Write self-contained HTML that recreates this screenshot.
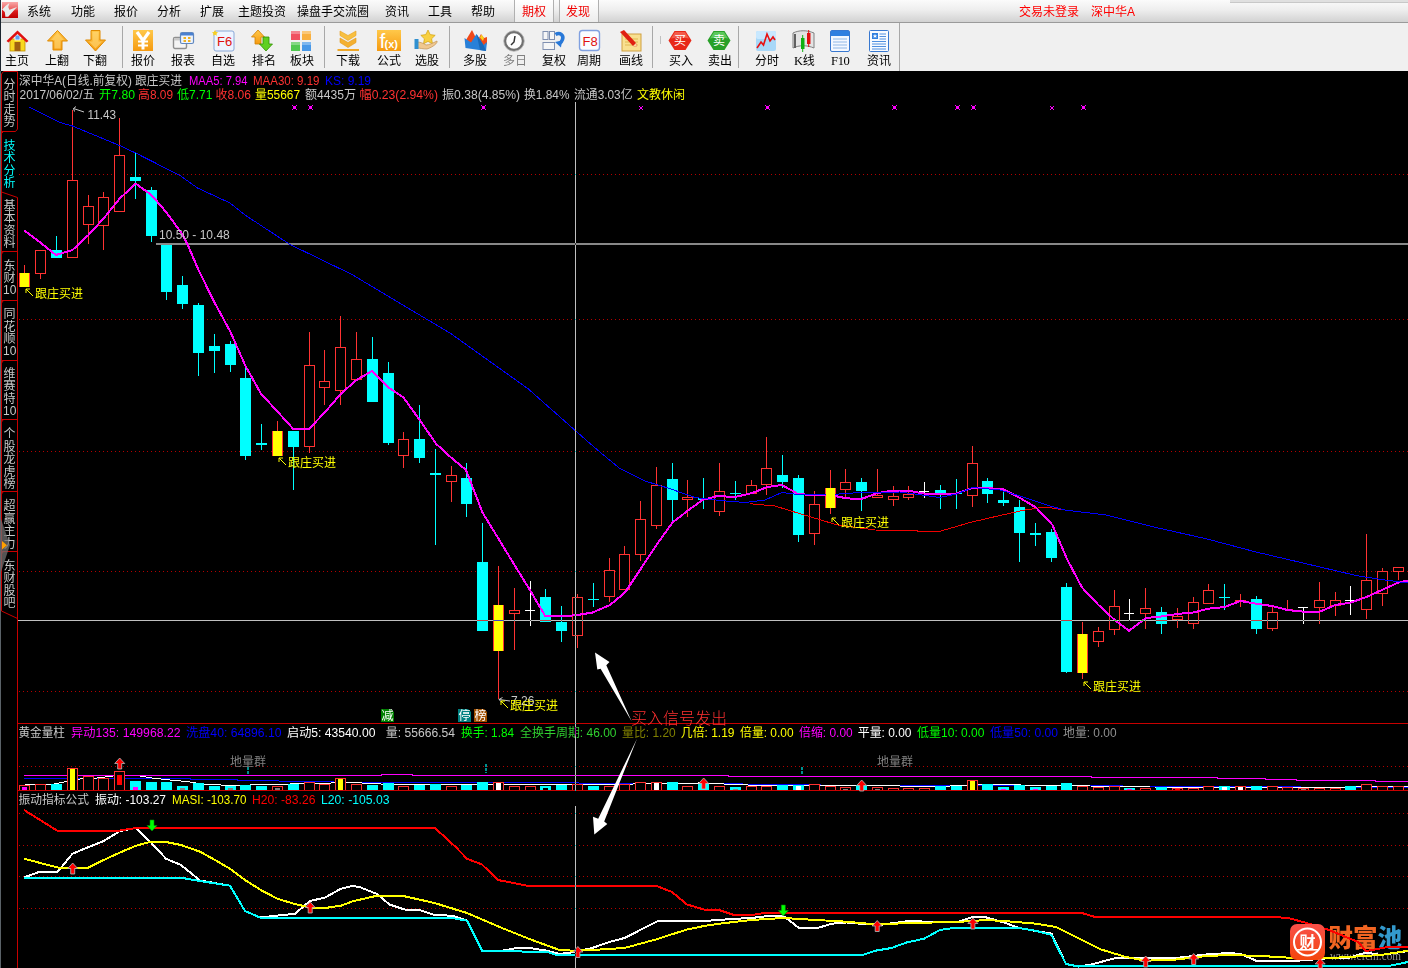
<!DOCTYPE html><html><head><meta charset="utf-8"><title>深中华A</title><style>
html,body{margin:0;padding:0;background:#000;}
#menubar span,#toolbar .lb{will-change:transform;}
body{width:1408px;height:968px;overflow:hidden;position:relative;font-family:"Liberation Sans","Noto Sans CJK SC",sans-serif;font-size:12px;}
#menubar{position:absolute;left:0;top:0;width:1408px;height:22px;background:linear-gradient(#fbfbfb 0%,#eeeeee 45%,#d2d2d2 100%);border-bottom:1px solid #9a9a9a;}
#menubar span{position:absolute;top:4px;line-height:16px;color:#000;white-space:nowrap;}
#menubar .tab{position:absolute;top:0;height:22px;border-left:1px solid #b0b0b0;border-right:1px solid #b0b0b0;background:linear-gradient(#ffffff,#ececec);}
#toolbar{position:absolute;left:0;top:23px;width:1408px;height:48px;background:#f0f0f0;}
#toolbar .lb{position:absolute;top:31px;line-height:14px;color:#000;white-space:nowrap;}
#toolbar .lb b{font-family:'Liberation Serif',serif;font-weight:400;font-size:12.5px;letter-spacing:-0.3px}
#toolbar .sp{position:absolute;top:3px;width:1px;height:42px;background:#a8a8a8;}
#toolbar svg{position:absolute;}
.edge{position:absolute;left:0;top:0;width:1px;height:71px;background:#1c2630;}

</style></head><body>
<div id="menubar">
<svg width="16" height="16" viewBox="0 0 16 16" style="position:absolute;left:2px;top:2px"><defs><linearGradient id="lgo" x1="0" y1="0" x2="0" y2="1"><stop offset="0" stop-color="#f8a8a8"/><stop offset="0.45" stop-color="#ec6060"/><stop offset="0.55" stop-color="#dc2020"/><stop offset="1" stop-color="#c00000"/></linearGradient></defs><rect width="16" height="16" fill="url(#lgo)"/><path d="M7.4 1L6.2 5.1L7.4 7.7L15 5.1L6.2 14.8H3.4L2.8 10L0.1 7.4L3.7 3.7Z" fill="#e8ecec"/></svg>
<span style="left:27px">系统</span>
<span style="left:70.5px">功能</span>
<span style="left:114px">报价</span>
<span style="left:157px">分析</span>
<span style="left:200px">扩展</span>
<span style="left:237.5px">主题投资</span>
<span style="left:297px">操盘手交流圈</span>
<span style="left:385px">资讯</span>
<span style="left:428px">工具</span>
<span style="left:471px">帮助</span>
<div class="tab" style="left:514px;width:38px"></div><div class="tab" style="left:559px;width:38px"></div>
<span style="left:522px;color:#f00000">期权</span><span style="left:566px;color:#f00000">发现</span>
<span style="left:1019px;color:#ff0000">交易未登录</span><span style="left:1091px;color:#ff0000">深中华A</span>
<div style="position:absolute;left:1230px;top:0;width:178px;height:2px;background:#e0e0e0;border-bottom:1px solid #c8c8c8"></div>
</div>
<div id="toolbar">
<svg width="24" height="24" viewBox="0 0 24 24" style="left:6px;top:6px"><rect x="4" y="10" width="15" height="12" fill="#f8d820" stroke="#c09000" stroke-width="0.8"/><rect x="8.5" y="13" width="6" height="9" fill="#a06010"/><rect x="9" y="6" width="5" height="5" fill="#60a0f0" stroke="#fff" stroke-width="0.8"/><path d="M0.5 12L11.5 1.5L22.5 12L20.5 13.5L11.5 5L2.5 13.5Z" fill="#e01010"/></svg>
<span class="lb" style="left:5px;color:#000">主页</span>
<svg width="24" height="24" viewBox="0 0 24 24" style="left:46px;top:6px"><defs><linearGradient id="og" x1="0" y1="0" x2="0" y2="1"><stop offset="0" stop-color="#ffc84a"/><stop offset="1" stop-color="#f59a10"/></linearGradient></defs><path d="M11.5 1.5L21.5 12H16V21H7V12H1.5Z" fill="url(#og)" stroke="#e08a00" stroke-width="1"/><path d="M11.5 4L18 11H14.5V19.5H8.5V11H5Z" fill="#ffd878" opacity="0.6"/></svg>
<span class="lb" style="left:44.5px;color:#000">上翻</span>
<svg width="24" height="24" viewBox="0 0 24 24" style="left:84px;top:6px"><path d="M11.5 22L21.5 11H16V1.5H7V11H1.5Z" fill="url(#og)" stroke="#e08a00" stroke-width="1"/><path d="M11.5 19.5L18 12.5H14.5V3H8.5V12.5H5Z" fill="#ffd878" opacity="0.6"/></svg>
<span class="lb" style="left:83px;color:#000">下翻</span>
<svg width="24" height="24" viewBox="0 0 24 24" style="left:131px;top:6px"><rect x="2" y="1" width="20" height="21" fill="url(#og)"/><path d="M6 3L12 11.500L18 3" stroke="#fff" stroke-width="3.2" fill="none"/><path d="M12 11V20.500" stroke="#fff" stroke-width="3" fill="none"/><path d="M7 12.500H17M7 16.500H17" stroke="#fff" stroke-width="2" fill="none"/></svg>
<span class="lb" style="left:131px;color:#000">报价</span>
<svg width="24" height="24" viewBox="0 0 24 24" style="left:172px;top:6px"><rect x="1.5" y="8.5" width="13" height="11" rx="1.5" fill="#f4f4f4" stroke="#909090" stroke-width="1.4"/><rect x="2" y="9" width="12" height="2.5" fill="#c8c8c8"/><rect x="8.5" y="3.5" width="13" height="11" rx="1.5" fill="#eef4fc" stroke="#6088c0" stroke-width="1.2"/><rect x="9" y="4" width="12" height="2.5" fill="#4a80d0"/><rect x="11.5" y="8" width="2.5" height="2" fill="#f0b020"/><rect x="16" y="8" width="2.5" height="2" fill="#f0b020"/><rect x="11.5" y="11" width="2.5" height="2" fill="#f0b020"/><rect x="16" y="11" width="2.5" height="2" fill="#f0b020"/></svg>
<span class="lb" style="left:171px;color:#000">报表</span>
<svg width="24" height="24" viewBox="0 0 24 24" style="left:212px;top:6px"><rect x="2" y="2" width="20" height="20" rx="2" fill="#eef4ff" stroke="#88a8d8"/><text x="5" y="17" font-size="13" fill="#e01010" font-family="Liberation Sans, sans-serif">F6</text><path d="M1 0l1 2l2 0.3l-1.5 1.4l0.4 2l-1.9-1l-1.9 1l0.4-2l-1.5-1.4l2-0.3z" transform="translate(2,1)" fill="#f8d020"/></svg>
<span class="lb" style="left:211px;color:#000">自选</span>
<svg width="24" height="24" viewBox="0 0 24 24" style="left:250px;top:6px"><path d="M8 1L14.5 8H11V15H5V8H1.5Z" fill="url(#og)" stroke="#d08000" stroke-width="0.8"/><path d="M16 22L22.5 15H19V8H13V15H9.5Z" fill="#60d020" stroke="#309000" stroke-width="0.8"/></svg>
<span class="lb" style="left:252px;color:#000">排名</span>
<svg width="24" height="24" viewBox="0 0 24 24" style="left:289px;top:6px"><rect x="2" y="2" width="9" height="9" fill="#f05060"/><rect x="13" y="2" width="9" height="9" fill="#f8b040"/><rect x="2" y="13" width="9" height="9" fill="#50c850"/><rect x="13" y="13" width="9" height="9" fill="#4898e8"/><rect x="2" y="2" width="9" height="3" fill="#fff" opacity="0.3"/><rect x="13" y="2" width="9" height="3" fill="#fff" opacity="0.3"/><rect x="2" y="13" width="9" height="3" fill="#fff" opacity="0.3"/><rect x="13" y="13" width="9" height="3" fill="#fff" opacity="0.3"/></svg>
<span class="lb" style="left:290px;color:#000">板块</span>
<svg width="24" height="24" viewBox="0 0 24 24" style="left:337px;top:6px"><path d="M3 2L11 6.500L19 2V6.500L11 11.500L3 6.500Z" fill="#f8c040" stroke="#e8a020" stroke-width="0.6"/><path d="M3 9L11 13.500L19 9V13.500L11 18.500L3 13.500Z" fill="#f4b030" stroke="#e09818" stroke-width="0.6"/><rect x="0.5" y="20" width="21.5" height="2" fill="#f0a828"/></svg>
<span class="lb" style="left:336px;color:#000">下载</span>
<svg width="24" height="24" viewBox="0 0 24 24" style="left:377px;top:6px"><rect x="0" y="1" width="24" height="21" fill="url(#og)"/><text x="2.5" y="19" font-size="21" fill="#fff" font-family="Liberation Sans, sans-serif">f</text><text x="7.5" y="19" font-size="11" font-weight="700" fill="#fff" font-family="Liberation Sans, sans-serif">(x)</text></svg>
<span class="lb" style="left:377px;color:#000">公式</span>
<svg width="26" height="24" viewBox="0 0 26 24" style="left:414px;top:6px"><path d="M14 1l2.2 4.6l5 0.7l-3.6 3.5l0.9 5l-4.5-2.4l-4.5 2.4l0.9-5l-3.6-3.5l5-0.7z" fill="#f8d040" stroke="#d0a010" stroke-width="0.7"/><path d="M3 13c3 0 6 1 9 3c3 0 7-2 11-4c1 2-4 6-10 8c-4 0-7-1-10-1z" fill="#f0c890" stroke="#c09050" stroke-width="0.7"/><rect x="0.5" y="10" width="4" height="10" fill="#3090d0"/></svg>
<span class="lb" style="left:414.5px;color:#000">选股</span>
<svg width="24" height="24" viewBox="0 0 24 24" style="left:464px;top:6px"><path d="M8 1L2 11L7.5 14.5L12 9Z" fill="#f04818"/><path d="M17 5L20 9L23 8V15L19 17L15 9Z" fill="#f04818"/><path d="M17.5 5.5L20 9L19 12L16 8.5Z" fill="#f8d020"/><path d="M0.5 9L1.500 19L22 22L23 13L19.500 16L12.500 5L7 13.500Z" fill="#2880d8"/><path d="M12.500 5L19.500 16L22 22L16 21Z" fill="#1868b8"/></svg>
<span class="lb" style="left:463px;color:#000">多股</span>
<svg width="24" height="24" viewBox="0 0 24 24" style="left:503px;top:6px"><circle cx="11" cy="12" r="9" fill="#fdfdfd" stroke="#707070" stroke-width="2.4"/><circle cx="11" cy="12" r="10.3" fill="none" stroke="#b0b0b0" stroke-width="0.8"/><path d="M12 7L11 13L8 16" stroke="#303030" stroke-width="1.5" fill="none"/></svg>
<span class="lb" style="left:503px;color:#808080">多日</span>
<svg width="24" height="24" viewBox="0 0 24 24" style="left:542px;top:6px"><rect x="1" y="2.5" width="5" height="8" fill="#f6f6f6" stroke="#8090b0"/><rect x="7.5" y="2.5" width="5" height="8" fill="#f6f6f6" stroke="#8090b0"/><rect x="1" y="13.5" width="11.5" height="7" fill="#f6f6f6" stroke="#8090b0"/><path d="M13.500 5.500C18 3 22 6 20.500 10.500C20 12 19 13.500 17.500 14.500" fill="none" stroke="#2878d8" stroke-width="3.600"/><path d="M13 13L20 11.500L19 18.500Z" fill="#2878d8"/></svg>
<span class="lb" style="left:542px;color:#000">复权</span>
<svg width="24" height="24" viewBox="0 0 24 24" style="left:578px;top:6px"><rect x="1.500" y="1.500" width="20" height="20" rx="3" fill="#fafcff" stroke="#80a0e0" stroke-width="1.4"/><text x="4.5" y="17" font-size="13" fill="#e01010" font-family="Liberation Sans, sans-serif">F8</text></svg>
<span class="lb" style="left:577px;color:#000">周期</span>
<svg width="24" height="24" viewBox="0 0 24 24" style="left:619px;top:6px"><rect x="3" y="5" width="19" height="17" fill="#f8e090" stroke="#d0a040"/><path d="M6 10H19M6 13H19M6 16H19" stroke="#e0b850" stroke-width="1"/><path d="M1 3L5 1L17 14L18 18L14 17Z" fill="#e02010"/><path d="M14 17l4 1l-1-4z" fill="#f8d8a0"/></svg>
<span class="lb" style="left:619px;color:#000">画线</span>
<svg width="24" height="24" viewBox="0 0 24 24" style="left:668px;top:6px"><path d="M6.500 2H17.500L23.500 11.500L17.500 21H6.500L0.500 11.500Z" fill="#e82818"/><path d="M7 3H17L21 9.500C15 8 9 8 3 9.500Z" fill="#f87060" opacity="0.7"/><text x="6" y="16" font-size="12" fill="#fff" font-family="Liberation Sans, Noto Sans CJK SC, sans-serif">买</text></svg>
<span class="lb" style="left:669px;color:#000">买入</span>
<svg width="24" height="24" viewBox="0 0 24 24" style="left:707px;top:6px"><path d="M6.500 2H17.500L23.500 11.500L17.500 21H6.500L0.500 11.500Z" fill="#28a028"/><path d="M7 3H17L21 9.500C15 8 9 8 3 9.500Z" fill="#70d870" opacity="0.7"/><text x="6" y="16" font-size="12" fill="#fff" font-family="Liberation Sans, Noto Sans CJK SC, sans-serif">卖</text></svg>
<span class="lb" style="left:707.5px;color:#000">卖出</span>
<svg width="24" height="24" viewBox="0 0 24 24" style="left:754px;top:6px"><rect x="2" y="2" width="20" height="20" rx="2" fill="#a8d8f8"/><rect x="2" y="2" width="20" height="8" rx="2" fill="#c8e8ff"/><path d="M3 19L7 13L9.500 16L13 5L16 12L19 8L21 11" stroke="#e81010" stroke-width="1.6" fill="none"/></svg>
<span class="lb" style="left:755px;color:#000">分时</span>
<svg width="24" height="24" viewBox="0 0 24 24" style="left:791px;top:6px"><path d="M2 4c6-3 14-3 21 0v15c-7-3-15-3-21 0z" fill="#e4e4e4" stroke="#808080"/><path d="M4 5v14" stroke="#606060" stroke-width="2"/><rect x="10" y="9" width="3.500" height="11" fill="#10b010"/><path d="M11.700 6v17" stroke="#10b010" stroke-width="1"/><rect x="16" y="4" width="3.500" height="11" fill="#e01010"/><path d="M17.700 1v17" stroke="#e01010" stroke-width="1"/></svg>
<span class="lb" style="left:794px;color:#000"><b>K</b>线</span>
<svg width="24" height="24" viewBox="0 0 24 24" style="left:828px;top:6px"><rect x="2.500" y="1.500" width="19" height="21" rx="1.500" fill="#f4f8ff" stroke="#3878d0"/><rect x="3" y="2" width="18" height="5" fill="#3080e0"/><path d="M5 10H19M5 13H19M5 16H19M5 19H19" stroke="#90b8e8" stroke-width="1.2"/></svg>
<span class="lb" style="left:831px;color:#000"><b>F10</b></span>
<svg width="24" height="24" viewBox="0 0 24 24" style="left:867px;top:6px"><rect x="2.500" y="1.500" width="19" height="21" rx="1" fill="#f8fbff" stroke="#3878d0"/><rect x="5" y="4" width="6" height="6" fill="#3080e0"/><path d="M8 5l0.700 1.500h1.500l-1.200 1l0.500 1.500l-1.500-1l-1.500 1l0.500-1.500l-1.200-1h1.500z" fill="#fff"/><path d="M12.500 5H19M12.500 7.500H19M12.500 10H19M5 12.500H19M5 15H19M5 17.500H19M5 20H19" stroke="#5090e0" stroke-width="1"/></svg>
<span class="lb" style="left:867px;color:#000">资讯</span>
<div class="sp" style="left:122px"></div>
<div class="sp" style="left:324px"></div>
<div class="sp" style="left:449px"></div>
<div class="sp" style="left:652px"></div>
<div class="sp" style="left:738px"></div>
<div class="sp" style="left:899px;top:0;height:48px"></div>
<div class="sp" style="left:660px;top:13px;height:8px;background:#c0c0c0"></div>
</div>
<div class="edge"></div>
<svg id="chart" width="1408" height="897" viewBox="0 71 1408 897" style="position:absolute;left:0;top:71px;will-change:transform;">
<rect x="0" y="70" width="1408" height="898" fill="#000"/>
<g stroke="#b40000" stroke-width="1" stroke-dasharray="1 3" shape-rendering="crispEdges">
<line x1="19" x2="1408" y1="174.5" y2="174.5"/>
<line x1="19" x2="1408" y1="319.5" y2="319.5"/>
<line x1="19" x2="1408" y1="451.5" y2="451.5"/>
<line x1="19" x2="1408" y1="571.5" y2="571.5"/>
<line x1="19" x2="1408" y1="691.5" y2="691.5"/>
<line x1="19" x2="1408" y1="766.5" y2="766.5"/>
<line x1="19" x2="1408" y1="813.5" y2="813.5"/>
<line x1="19" x2="1408" y1="845.5" y2="845.5"/>
<line x1="19" x2="1408" y1="876.5" y2="876.5"/>
<line x1="19" x2="1408" y1="908.5" y2="908.5"/>
</g>
<g shape-rendering="crispEdges" stroke-width="1">
<rect x="24" y="265" width="1" height="22" fill="#ff3232"/>
<rect x="19.5" y="273.5" width="10" height="13" fill="#000" stroke="#ff3232"/>
<rect x="40" y="274" width="1" height="5" fill="#ff3232"/>
<rect x="35.5" y="250.5" width="10" height="23" fill="#000" stroke="#ff3232"/>
<rect x="56" y="236" width="1" height="22" fill="#00ffff"/>
<rect x="51" y="250" width="11" height="8" fill="#00ffff"/>
<rect x="72" y="110" width="1" height="70" fill="#ff3232"/>
<rect x="67.5" y="180.5" width="10" height="77" fill="#000" stroke="#ff3232"/>
<rect x="88" y="195" width="1" height="11" fill="#ff3232"/>
<rect x="88" y="225" width="1" height="19" fill="#ff3232"/>
<rect x="83.5" y="206.5" width="10" height="18" fill="#000" stroke="#ff3232"/>
<rect x="103" y="192" width="1" height="5" fill="#ff3232"/>
<rect x="103" y="226" width="1" height="24" fill="#ff3232"/>
<rect x="98.5" y="197.5" width="10" height="28" fill="#000" stroke="#ff3232"/>
<rect x="119" y="118" width="1" height="37" fill="#ff3232"/>
<rect x="114.5" y="155.5" width="10" height="56" fill="#000" stroke="#ff3232"/>
<rect x="135" y="153" width="1" height="46" fill="#00ffff"/>
<rect x="130" y="177" width="11" height="4" fill="#00ffff"/>
<rect x="151" y="187" width="1" height="55" fill="#00ffff"/>
<rect x="146" y="190" width="11" height="46" fill="#00ffff"/>
<rect x="166" y="244" width="1" height="56" fill="#00ffff"/>
<rect x="161" y="244" width="11" height="48" fill="#00ffff"/>
<rect x="182" y="276" width="1" height="33" fill="#00ffff"/>
<rect x="177" y="285" width="11" height="19" fill="#00ffff"/>
<rect x="198" y="303" width="1" height="73" fill="#00ffff"/>
<rect x="193" y="305" width="11" height="48" fill="#00ffff"/>
<rect x="214" y="334" width="1" height="39" fill="#00ffff"/>
<rect x="209" y="346" width="11" height="5" fill="#00ffff"/>
<rect x="230" y="341" width="1" height="31" fill="#00ffff"/>
<rect x="225" y="344" width="11" height="21" fill="#00ffff"/>
<rect x="245" y="368" width="1" height="92" fill="#00ffff"/>
<rect x="240" y="378" width="11" height="78" fill="#00ffff"/>
<rect x="261" y="424" width="1" height="26" fill="#00ffff"/>
<rect x="256" y="443" width="11" height="2" fill="#00ffff"/>
<rect x="277" y="421" width="1" height="35" fill="#ff3232"/>
<rect x="272.5" y="431.5" width="10" height="24" fill="#000" stroke="#ff3232"/>
<rect x="293" y="431" width="1" height="59" fill="#00ffff"/>
<rect x="288" y="431" width="11" height="16" fill="#00ffff"/>
<rect x="309" y="332" width="1" height="33" fill="#ff3232"/>
<rect x="309" y="447" width="1" height="6" fill="#ff3232"/>
<rect x="304.5" y="365.5" width="10" height="81" fill="#000" stroke="#ff3232"/>
<rect x="324" y="350" width="1" height="31" fill="#ff3232"/>
<rect x="324" y="388" width="1" height="17" fill="#ff3232"/>
<rect x="319.5" y="381.5" width="10" height="6" fill="#000" stroke="#ff3232"/>
<rect x="340" y="316" width="1" height="31" fill="#ff3232"/>
<rect x="340" y="391" width="1" height="14" fill="#ff3232"/>
<rect x="335.5" y="347.5" width="10" height="43" fill="#000" stroke="#ff3232"/>
<rect x="356" y="332" width="1" height="27" fill="#ff3232"/>
<rect x="351.5" y="359.5" width="10" height="20" fill="#000" stroke="#ff3232"/>
<rect x="372" y="337" width="1" height="65" fill="#00ffff"/>
<rect x="367" y="359" width="11" height="43" fill="#00ffff"/>
<rect x="388" y="362" width="1" height="83" fill="#00ffff"/>
<rect x="383" y="373" width="11" height="70" fill="#00ffff"/>
<rect x="403" y="432" width="1" height="7" fill="#ff3232"/>
<rect x="403" y="456" width="1" height="12" fill="#ff3232"/>
<rect x="398.5" y="439.5" width="10" height="16" fill="#000" stroke="#ff3232"/>
<rect x="419" y="405" width="1" height="58" fill="#00ffff"/>
<rect x="414" y="439" width="11" height="19" fill="#00ffff"/>
<rect x="435" y="449" width="1" height="96" fill="#00ffff"/>
<rect x="430" y="473" width="11" height="2" fill="#00ffff"/>
<rect x="451" y="466" width="1" height="9" fill="#ff3232"/>
<rect x="451" y="482" width="1" height="20" fill="#ff3232"/>
<rect x="446.5" y="475.5" width="10" height="6" fill="#000" stroke="#ff3232"/>
<rect x="466" y="463" width="1" height="54" fill="#00ffff"/>
<rect x="461" y="478" width="11" height="26" fill="#00ffff"/>
<rect x="482" y="523" width="1" height="108" fill="#00ffff"/>
<rect x="477" y="562" width="11" height="69" fill="#00ffff"/>
<rect x="498" y="566" width="1" height="133" fill="#ff3232"/>
<rect x="493.5" y="605.5" width="10" height="45" fill="#000" stroke="#ff3232"/>
<rect x="514" y="588" width="1" height="22" fill="#ff3232"/>
<rect x="514" y="614" width="1" height="36" fill="#ff3232"/>
<rect x="509.5" y="610.5" width="10" height="3" fill="#000" stroke="#ff3232"/>
<rect x="530" y="581" width="1" height="45" fill="#ffffff"/>
<rect x="525" y="610" width="10" height="1" fill="#ffffff"/>
<rect x="545" y="589" width="1" height="33" fill="#00ffff"/>
<rect x="540" y="597" width="11" height="25" fill="#00ffff"/>
<rect x="561" y="606" width="1" height="36" fill="#00ffff"/>
<rect x="556" y="622" width="11" height="9" fill="#00ffff"/>
<rect x="577" y="594" width="1" height="3" fill="#ff3232"/>
<rect x="577" y="636" width="1" height="12" fill="#ff3232"/>
<rect x="572.5" y="597.5" width="10" height="38" fill="#000" stroke="#ff3232"/>
<rect x="593" y="583" width="1" height="24" fill="#00ffff"/>
<rect x="588" y="599" width="11" height="1" fill="#00ffff"/>
<rect x="609" y="558" width="1" height="12" fill="#ff3232"/>
<rect x="609" y="597" width="1" height="5" fill="#ff3232"/>
<rect x="604.5" y="570.5" width="10" height="26" fill="#000" stroke="#ff3232"/>
<rect x="624" y="546" width="1" height="8" fill="#ff3232"/>
<rect x="619.5" y="554.5" width="10" height="35" fill="#000" stroke="#ff3232"/>
<rect x="640" y="501" width="1" height="18" fill="#ff3232"/>
<rect x="640" y="555" width="1" height="6" fill="#ff3232"/>
<rect x="635.5" y="519.5" width="10" height="35" fill="#000" stroke="#ff3232"/>
<rect x="656" y="467" width="1" height="18" fill="#ff3232"/>
<rect x="656" y="526" width="1" height="3" fill="#ff3232"/>
<rect x="651.5" y="485.5" width="10" height="40" fill="#000" stroke="#ff3232"/>
<rect x="672" y="463" width="1" height="60" fill="#00ffff"/>
<rect x="667" y="479" width="11" height="21" fill="#00ffff"/>
<rect x="687" y="480" width="1" height="17" fill="#ff3232"/>
<rect x="687" y="500" width="1" height="17" fill="#ff3232"/>
<rect x="682.5" y="497.5" width="10" height="2" fill="#000" stroke="#ff3232"/>
<rect x="703" y="478" width="1" height="31" fill="#00ffff"/>
<rect x="698" y="498" width="11" height="2" fill="#00ffff"/>
<rect x="719" y="463" width="1" height="28" fill="#ff3232"/>
<rect x="719" y="512" width="1" height="4" fill="#ff3232"/>
<rect x="714.5" y="491.5" width="10" height="20" fill="#000" stroke="#ff3232"/>
<rect x="735" y="481" width="1" height="19" fill="#00ffff"/>
<rect x="730" y="493" width="11" height="1" fill="#00ffff"/>
<rect x="751" y="480" width="1" height="5" fill="#ff3232"/>
<rect x="746.5" y="485.5" width="10" height="8" fill="#000" stroke="#ff3232"/>
<rect x="766" y="437" width="1" height="31" fill="#ff3232"/>
<rect x="766" y="485" width="1" height="10" fill="#ff3232"/>
<rect x="761.5" y="468.5" width="10" height="16" fill="#000" stroke="#ff3232"/>
<rect x="782" y="455" width="1" height="33" fill="#00ffff"/>
<rect x="777" y="475" width="11" height="7" fill="#00ffff"/>
<rect x="798" y="475" width="1" height="67" fill="#00ffff"/>
<rect x="793" y="478" width="11" height="57" fill="#00ffff"/>
<rect x="814" y="491" width="1" height="13" fill="#ff3232"/>
<rect x="814" y="534" width="1" height="11" fill="#ff3232"/>
<rect x="809.5" y="504.5" width="10" height="29" fill="#000" stroke="#ff3232"/>
<rect x="830" y="470" width="1" height="44" fill="#ff3232"/>
<rect x="825.5" y="488.5" width="10" height="19" fill="#000" stroke="#ff3232"/>
<rect x="845" y="469" width="1" height="13" fill="#ff3232"/>
<rect x="845" y="490" width="1" height="8" fill="#ff3232"/>
<rect x="840.5" y="482.5" width="10" height="7" fill="#000" stroke="#ff3232"/>
<rect x="861" y="478" width="1" height="33" fill="#00ffff"/>
<rect x="856" y="482" width="11" height="9" fill="#00ffff"/>
<rect x="877" y="469" width="1" height="26" fill="#ff3232"/>
<rect x="872.5" y="495.5" width="10" height="2" fill="#000" stroke="#ff3232"/>
<rect x="893" y="486" width="1" height="10" fill="#ff3232"/>
<rect x="893" y="500" width="1" height="6" fill="#ff3232"/>
<rect x="888.5" y="496.5" width="10" height="3" fill="#000" stroke="#ff3232"/>
<rect x="908" y="486" width="1" height="8" fill="#ff3232"/>
<rect x="908" y="498" width="1" height="2" fill="#ff3232"/>
<rect x="903.5" y="494.5" width="10" height="3" fill="#000" stroke="#ff3232"/>
<rect x="924" y="482" width="1" height="16" fill="#ffffff"/>
<rect x="919" y="491" width="10" height="1" fill="#ffffff"/>
<rect x="940" y="485" width="1" height="24" fill="#00ffff"/>
<rect x="935" y="490" width="11" height="4" fill="#00ffff"/>
<rect x="956" y="479" width="1" height="30" fill="#00ffff"/>
<rect x="951" y="493" width="11" height="1" fill="#00ffff"/>
<rect x="972" y="446" width="1" height="17" fill="#ff3232"/>
<rect x="972" y="496" width="1" height="11" fill="#ff3232"/>
<rect x="967.5" y="463.5" width="10" height="32" fill="#000" stroke="#ff3232"/>
<rect x="987" y="478" width="1" height="25" fill="#00ffff"/>
<rect x="982" y="481" width="11" height="13" fill="#00ffff"/>
<rect x="1003" y="488" width="1" height="18" fill="#00ffff"/>
<rect x="998" y="500" width="11" height="3" fill="#00ffff"/>
<rect x="1019" y="500" width="1" height="62" fill="#00ffff"/>
<rect x="1014" y="507" width="11" height="26" fill="#00ffff"/>
<rect x="1035" y="523" width="1" height="23" fill="#00ffff"/>
<rect x="1030" y="533" width="11" height="2" fill="#00ffff"/>
<rect x="1051" y="529" width="1" height="33" fill="#00ffff"/>
<rect x="1046" y="532" width="11" height="26" fill="#00ffff"/>
<rect x="1066" y="583" width="1" height="90" fill="#00ffff"/>
<rect x="1061" y="587" width="11" height="85" fill="#00ffff"/>
<rect x="1082" y="622" width="1" height="57" fill="#ff3232"/>
<rect x="1077.5" y="634.5" width="10" height="38" fill="#000" stroke="#ff3232"/>
<rect x="1098" y="627" width="1" height="4" fill="#ff3232"/>
<rect x="1098" y="642" width="1" height="5" fill="#ff3232"/>
<rect x="1093.5" y="631.5" width="10" height="10" fill="#000" stroke="#ff3232"/>
<rect x="1114" y="590" width="1" height="16" fill="#ff3232"/>
<rect x="1114" y="630" width="1" height="5" fill="#ff3232"/>
<rect x="1109.5" y="606.5" width="10" height="23" fill="#000" stroke="#ff3232"/>
<rect x="1129" y="599" width="1" height="22" fill="#ffffff"/>
<rect x="1124" y="613" width="10" height="1" fill="#ffffff"/>
<rect x="1145" y="588" width="1" height="20" fill="#ff3232"/>
<rect x="1145" y="614" width="1" height="15" fill="#ff3232"/>
<rect x="1140.5" y="608.5" width="10" height="5" fill="#000" stroke="#ff3232"/>
<rect x="1161" y="607" width="1" height="27" fill="#00ffff"/>
<rect x="1156" y="612" width="11" height="12" fill="#00ffff"/>
<rect x="1177" y="608" width="1" height="8" fill="#ff3232"/>
<rect x="1177" y="620" width="1" height="8" fill="#ff3232"/>
<rect x="1172.5" y="616.5" width="10" height="3" fill="#000" stroke="#ff3232"/>
<rect x="1193" y="597" width="1" height="5" fill="#ff3232"/>
<rect x="1193" y="624" width="1" height="5" fill="#ff3232"/>
<rect x="1188.5" y="602.5" width="10" height="21" fill="#000" stroke="#ff3232"/>
<rect x="1208" y="584" width="1" height="6" fill="#ff3232"/>
<rect x="1203.5" y="590.5" width="10" height="13" fill="#000" stroke="#ff3232"/>
<rect x="1224" y="584" width="1" height="26" fill="#00ffff"/>
<rect x="1219" y="597" width="11" height="1" fill="#00ffff"/>
<rect x="1240" y="594" width="1" height="6" fill="#ff3232"/>
<rect x="1240" y="602" width="1" height="5" fill="#ff3232"/>
<rect x="1235" y="600" width="11" height="2" fill="#ff3232"/>
<rect x="1256" y="596" width="1" height="38" fill="#00ffff"/>
<rect x="1251" y="599" width="11" height="30" fill="#00ffff"/>
<rect x="1272" y="607" width="1" height="5" fill="#ff3232"/>
<rect x="1272" y="629" width="1" height="2" fill="#ff3232"/>
<rect x="1267.5" y="612.5" width="10" height="16" fill="#000" stroke="#ff3232"/>
<rect x="1287" y="600" width="1" height="10" fill="#ff3232"/>
<rect x="1282" y="609" width="11" height="1" fill="#ff3232"/>
<rect x="1303" y="607" width="1" height="17" fill="#ffffff"/>
<rect x="1298" y="607" width="10" height="1" fill="#ffffff"/>
<rect x="1319" y="582" width="1" height="18" fill="#ff3232"/>
<rect x="1319" y="608" width="1" height="16" fill="#ff3232"/>
<rect x="1314.5" y="600.5" width="10" height="7" fill="#000" stroke="#ff3232"/>
<rect x="1335" y="592" width="1" height="8" fill="#ff3232"/>
<rect x="1335" y="606" width="1" height="10" fill="#ff3232"/>
<rect x="1330.5" y="600.5" width="10" height="5" fill="#000" stroke="#ff3232"/>
<rect x="1350" y="586" width="1" height="29" fill="#ffffff"/>
<rect x="1345" y="600" width="10" height="1" fill="#ffffff"/>
<rect x="1366" y="534" width="1" height="46" fill="#ff3232"/>
<rect x="1366" y="610" width="1" height="9" fill="#ff3232"/>
<rect x="1361.5" y="580.5" width="10" height="29" fill="#000" stroke="#ff3232"/>
<rect x="1382" y="568" width="1" height="3" fill="#ff3232"/>
<rect x="1382" y="594" width="1" height="12" fill="#ff3232"/>
<rect x="1377.5" y="571.5" width="10" height="22" fill="#000" stroke="#ff3232"/>
<rect x="1398" y="572" width="1" height="8" fill="#ff3232"/>
<rect x="1393.5" y="567.5" width="10" height="4" fill="#000" stroke="#ff3232"/>
</g>
<rect x="156" y="243" width="1252" height="2" fill="#888888" shape-rendering="crispEdges"/>
<polyline points="750.0,503.7 775.0,506.0 800.0,513.7 837.5,525.0 875.0,530.0 917.5,531.0 941.0,531.0 970.0,522.5 1000.0,515.5 1025.0,510.0 1045.0,507.0 1065.0,510.0" fill="none" stroke="#f00000" stroke-width="1" shape-rendering="crispEdges"/>
<polyline points="24.5,230.5 40.5,242.7 56.0,255.0 72.5,250.0 88.5,235.0 104.0,218.0 119.5,198.7 135.7,183.7 151.5,195.0 166.5,212.5 182.5,234.5 188.0,245.5 198.5,270.0 214.5,302.5 230.0,331.0 245.5,366.0 261.0,393.7 277.0,411.0 293.0,428.7 309.0,429.0 324.7,412.5 341.0,393.7 356.5,380.0 372.0,371.0 388.5,387.5 403.5,397.5 419.7,420.0 436.0,443.7 451.0,457.5 466.0,470.0 482.5,512.5 498.5,538.7 514.5,565.0 530.5,591.0 545.0,615.7 570.0,615.7 577.5,615.0 592.5,612.5 610.0,605.0 625.0,592.5 640.0,570.0 656.5,545.0 672.5,522.5 688.7,510.0 702.5,500.0 717.5,496.0 735.0,497.0 752.5,493.0 767.0,487.0 782.0,485.0 797.5,493.7 815.0,495.5 830.0,495.0 845.0,498.0 860.0,499.5 877.5,493.0 893.7,490.5 910.0,491.0 925.0,493.7 940.0,494.0 956.0,493.7 972.5,488.0 987.5,488.0 1003.7,489.5 1020.0,498.0 1036.0,507.5 1052.5,525.0 1067.5,560.0 1082.0,587.5 1098.5,605.0 1114.7,620.0 1129.0,630.7 1146.0,618.0 1161.0,616.5 1177.0,614.0 1193.5,612.5 1208.5,608.7 1224.7,607.0 1240.5,601.0 1256.0,603.7 1272.0,606.0 1287.5,610.0 1303.5,611.7 1319.7,611.7 1335.5,605.0 1351.0,602.5 1366.5,597.0 1382.0,590.0 1398.5,582.5 1408.0,580.5" fill="none" stroke="#ff00ff" stroke-width="2" stroke-linejoin="round" shape-rendering="crispEdges"/>
<polyline points="28.7,107.0 60.0,122.5 72.5,126.0 120.0,145.7 135.7,153.0 180.0,175.5 197.5,188.0 230.0,203.0 245.0,215.0 290.0,244.5 352.0,274.5 361.0,280.0 451.0,333.7 528.0,388.7 586.0,440.0 597.5,450.0 620.0,468.7 645.0,481.0 670.0,488.7 695.0,497.5 720.0,500.5 745.0,502.5 765.0,500.0 782.0,492.5 797.5,494.5 825.0,495.0 860.0,492.5 900.0,492.0 940.0,497.5 957.5,493.7 972.5,487.5 1000.0,490.0 1020.0,496.0 1050.0,506.0 1065.0,510.0 1106.0,515.0 1156.0,527.5 1206.0,538.7 1256.0,552.0 1306.0,563.7 1356.0,575.5 1381.0,579.5 1408.0,583.0" fill="none" stroke="#0000ff" stroke-width="1" shape-rendering="crispEdges"/>
<g shape-rendering="crispEdges">
<rect x="20" y="273" width="9" height="14" fill="#ffff00"/>
<rect x="273" y="431" width="9" height="25" fill="#ffff00"/>
<rect x="494" y="605" width="9" height="46" fill="#ffff00"/>
<rect x="826" y="488" width="9" height="20" fill="#ffff00"/>
<rect x="1078" y="634" width="9" height="39" fill="#ffff00"/>
</g>
<g fill="#ff00ff" shape-rendering="crispEdges">
<rect x="293" y="106" width="3" height="3"/>
<rect x="292" y="105" width="1" height="1"/>
<rect x="296" y="105" width="1" height="1"/>
<rect x="292" y="109" width="1" height="1"/>
<rect x="296" y="109" width="1" height="1"/>
<rect x="309" y="106" width="3" height="3"/>
<rect x="308" y="105" width="1" height="1"/>
<rect x="312" y="105" width="1" height="1"/>
<rect x="308" y="109" width="1" height="1"/>
<rect x="312" y="109" width="1" height="1"/>
<rect x="482" y="106" width="3" height="3"/>
<rect x="481" y="105" width="1" height="1"/>
<rect x="485" y="105" width="1" height="1"/>
<rect x="481" y="109" width="1" height="1"/>
<rect x="485" y="109" width="1" height="1"/>
<rect x="640" y="107" width="2" height="2"/>
<rect x="639" y="106" width="1" height="1"/>
<rect x="642" y="106" width="1" height="1"/>
<rect x="639" y="109" width="1" height="1"/>
<rect x="642" y="109" width="1" height="1"/>
<rect x="766" y="106" width="3" height="3"/>
<rect x="765" y="105" width="1" height="1"/>
<rect x="769" y="105" width="1" height="1"/>
<rect x="765" y="109" width="1" height="1"/>
<rect x="769" y="109" width="1" height="1"/>
<rect x="893" y="106" width="3" height="3"/>
<rect x="892" y="105" width="1" height="1"/>
<rect x="896" y="105" width="1" height="1"/>
<rect x="892" y="109" width="1" height="1"/>
<rect x="896" y="109" width="1" height="1"/>
<rect x="956" y="106" width="3" height="3"/>
<rect x="955" y="105" width="1" height="1"/>
<rect x="959" y="105" width="1" height="1"/>
<rect x="955" y="109" width="1" height="1"/>
<rect x="959" y="109" width="1" height="1"/>
<rect x="972" y="106" width="3" height="3"/>
<rect x="971" y="105" width="1" height="1"/>
<rect x="975" y="105" width="1" height="1"/>
<rect x="971" y="109" width="1" height="1"/>
<rect x="975" y="109" width="1" height="1"/>
<rect x="1051" y="107" width="2" height="2"/>
<rect x="1050" y="106" width="1" height="1"/>
<rect x="1053" y="106" width="1" height="1"/>
<rect x="1050" y="109" width="1" height="1"/>
<rect x="1053" y="109" width="1" height="1"/>
<rect x="1082" y="106" width="3" height="3"/>
<rect x="1081" y="105" width="1" height="1"/>
<rect x="1085" y="105" width="1" height="1"/>
<rect x="1081" y="109" width="1" height="1"/>
<rect x="1085" y="109" width="1" height="1"/>
</g>
<text y="85" font-size="12" font-family="Liberation Sans, Noto Sans CJK SC, sans-serif"><tspan x="19" fill="#c8c8c8" textLength="163" lengthAdjust="spacingAndGlyphs">深中华A(日线.前复权) 跟庄买进</tspan><tspan x="189" fill="#ff00ff" textLength="58.5" lengthAdjust="spacingAndGlyphs">MAA5: 7.94</tspan><tspan x="253" fill="#ff3232" textLength="66.5" lengthAdjust="spacingAndGlyphs">MAA30: 9.19</tspan><tspan x="325" fill="#0000ff" textLength="46" lengthAdjust="spacingAndGlyphs">KS: 9.19</tspan></text>
<text y="99" font-size="12" font-family="Liberation Sans, Noto Sans CJK SC, sans-serif"><tspan x="19.5" fill="#c8c8c8" textLength="75.0" lengthAdjust="spacingAndGlyphs">2017/06/02/五</tspan><tspan x="99" fill="#00ff00" textLength="36.0" lengthAdjust="spacingAndGlyphs">开7.80</tspan><tspan x="138" fill="#ff3232" textLength="35.0" lengthAdjust="spacingAndGlyphs">高8.09</tspan><tspan x="177" fill="#00ff00" textLength="35.5" lengthAdjust="spacingAndGlyphs">低7.71</tspan><tspan x="215.5" fill="#ff3232" textLength="35.5" lengthAdjust="spacingAndGlyphs">收8.06</tspan><tspan x="255" fill="#ffff00" textLength="45.0" lengthAdjust="spacingAndGlyphs">量55667</tspan><tspan x="305" fill="#c8c8c8" textLength="51.0" lengthAdjust="spacingAndGlyphs">额4435万</tspan><tspan x="359.5" fill="#ff3232" textLength="78.5" lengthAdjust="spacingAndGlyphs">幅0.23(2.94%)</tspan><tspan x="442" fill="#c8c8c8" textLength="78.0" lengthAdjust="spacingAndGlyphs">振0.38(4.85%)</tspan><tspan x="524" fill="#c8c8c8" textLength="45.5" lengthAdjust="spacingAndGlyphs">换1.84%</tspan><tspan x="574" fill="#c8c8c8" textLength="58.5" lengthAdjust="spacingAndGlyphs">流通3.03亿</tspan><tspan x="637" fill="#ffff00" textLength="48.0" lengthAdjust="spacingAndGlyphs">文教休闲</tspan></text>
<text x="87.5" y="119" fill="#c8c8c8" font-size="12" font-family="Liberation Sans, Noto Sans CJK SC, sans-serif" textLength="28.5" lengthAdjust="spacingAndGlyphs">11.43</text>
<path d="M73.5 108.5L84 112M73.5 108.5l2.5 -2M73.5 108.5l1 3" stroke="#c8c8c8" stroke-width="1" fill="none"/>
<text x="159" y="239" fill="#c8c8c8" font-size="12" font-family="Liberation Sans, Noto Sans CJK SC, sans-serif" >10.50 - 10.48</text>
<text x="511" y="705" fill="#c8c8c8" font-size="12" font-family="Liberation Sans, Noto Sans CJK SC, sans-serif" >7.26</text>
<path d="M499 699.5L510 701M499 699.5l3.5 -2M499 699.5l3 3" stroke="#c8c8c8" stroke-width="1" fill="none"/>
<path d="M26 289L33 296M26 289h4M26 289v4" stroke="#ffff00" stroke-width="1" fill="none"/>
<text x="35" y="298" fill="#ffff00" font-size="12" font-family="Liberation Sans, Noto Sans CJK SC, sans-serif" >跟庄买进</text>
<path d="M279 458L286 465M279 458h4M279 458v4" stroke="#ffff00" stroke-width="1" fill="none"/>
<text x="288" y="467" fill="#ffff00" font-size="12" font-family="Liberation Sans, Noto Sans CJK SC, sans-serif" >跟庄买进</text>
<path d="M501 701L508 708M501 701h4M501 701v4" stroke="#ffff00" stroke-width="1" fill="none"/>
<text x="510" y="710" fill="#ffff00" font-size="12" font-family="Liberation Sans, Noto Sans CJK SC, sans-serif" >跟庄买进</text>
<path d="M832 518L839 525M832 518h4M832 518v4" stroke="#ffff00" stroke-width="1" fill="none"/>
<text x="841" y="527" fill="#ffff00" font-size="12" font-family="Liberation Sans, Noto Sans CJK SC, sans-serif" >跟庄买进</text>
<path d="M1084 682L1091 689M1084 682h4M1084 682v4" stroke="#ffff00" stroke-width="1" fill="none"/>
<text x="1093" y="691" fill="#ffff00" font-size="12" font-family="Liberation Sans, Noto Sans CJK SC, sans-serif" >跟庄买进</text>
<path d="M381 709h10l3 3v10h-13z" fill="#008000"/>
<text x="381.5" y="720" fill="#fff" font-size="12" font-family="Liberation Sans, Noto Sans CJK SC, sans-serif">减</text>
<path d="M458 709h10l3 3v10h-13z" fill="#008080"/>
<text x="458.5" y="720" fill="#fff" font-size="12" font-family="Liberation Sans, Noto Sans CJK SC, sans-serif">停</text>
<path d="M474 709h10l3 3v10h-13z" fill="#a05000"/>
<text x="474.5" y="720" fill="#fff" font-size="12" font-family="Liberation Sans, Noto Sans CJK SC, sans-serif">榜</text>
<g shape-rendering="crispEdges" fill="#c80000">
<rect x="18" y="723" width="1390" height="1"/>
<rect x="18" y="790" width="1390" height="1"/>
</g>
<polyline points="24.0,778.5 190.0,778.5 190.0,779.5 237.0,779.5 237.0,780.5 270.0,780.5 287.0,781.5 380.0,782.5 450.0,782.5 704.0,783.5 860.0,785.5 1056.0,785.5 1190.0,786.5 1408.0,787.5" fill="none" stroke="#0000ff" stroke-width="1" shape-rendering="crispEdges"/>
<polyline points="24.7,785.0 51.0,784.5 66.4,781.6 80.0,779.0 95.4,778.2 109.0,776.5 119.0,775.3 136.0,775.3 153.0,778.2 170.0,780.0 187.0,781.6 204.0,784.2 221.0,785.0 250.0,785.0 352.0,782.5 400.0,785.0 480.0,784.0 520.0,784.5 600.0,785.0 650.0,783.5 700.0,783.0 760.0,785.5 860.0,785.5 940.0,786.5 980.0,784.5 1060.0,785.5 1150.0,787.0 1300.0,787.5 1408.0,786.5" fill="none" stroke="#ffffff" stroke-width="1" shape-rendering="crispEdges"/>
<polyline points="24.0,775.5 381.0,775.5 381.0,774.5 412.0,774.5 412.0,775.5 728.0,775.5 728.0,776.5 1091.0,776.5 1091.0,777.5 1217.0,777.5 1217.0,778.5 1265.0,778.5 1265.0,779.5 1296.0,779.5 1296.0,780.5 1375.0,780.5 1375.0,781.5 1408.0,781.5" fill="none" stroke="#ff00ff" stroke-width="1" shape-rendering="crispEdges"/>
<g shape-rendering="crispEdges">
<rect x="19.5" y="785.5" width="10" height="5" fill="#000" stroke="#ff3232"/>
<rect x="22" y="787" width="5" height="3" fill="#ff00ff"/>
<rect x="35.5" y="784.5" width="10" height="6" fill="#000" stroke="#ff3232"/>
<rect x="51" y="784" width="11" height="6" fill="#00ffff"/>
<rect x="67.5" y="768.5" width="10" height="22" fill="#000" stroke="#ff3232"/>
<rect x="70" y="769" width="5" height="21" fill="#ffff00"/>
<rect x="83.5" y="776.5" width="10" height="14" fill="#000" stroke="#ff3232"/>
<rect x="98.5" y="778.5" width="10" height="12" fill="#000" stroke="#ff3232"/>
<rect x="114.5" y="771.5" width="10" height="19" fill="#000" stroke="#ff3232"/>
<rect x="117" y="775" width="5" height="10" fill="#ff0000"/>
<rect x="130" y="781" width="11" height="9" fill="#00ffff"/>
<rect x="133" y="787" width="5" height="3" fill="#ff00ff"/>
<rect x="146" y="782" width="11" height="8" fill="#00ffff"/>
<rect x="161" y="782" width="11" height="8" fill="#00ffff"/>
<rect x="177" y="786" width="11" height="4" fill="#00ffff"/>
<rect x="180" y="788" width="5" height="2" fill="#808080"/>
<rect x="193" y="783" width="11" height="7" fill="#00ffff"/>
<rect x="209" y="786" width="11" height="4" fill="#00ffff"/>
<rect x="225" y="786" width="11" height="4" fill="#00ffff"/>
<rect x="228" y="788" width="5" height="2" fill="#808080"/>
<rect x="240" y="785" width="11" height="5" fill="#00ffff"/>
<rect x="256" y="786" width="11" height="4" fill="#00ffff"/>
<rect x="272.5" y="786.5" width="10" height="4" fill="#000" stroke="#ff3232"/>
<rect x="275" y="788" width="5" height="2" fill="#808080"/>
<rect x="288" y="784" width="11" height="6" fill="#00ffff"/>
<rect x="304.5" y="782.5" width="10" height="8" fill="#000" stroke="#ff3232"/>
<rect x="319.5" y="784.5" width="10" height="6" fill="#000" stroke="#ff3232"/>
<rect x="335.5" y="778.5" width="10" height="12" fill="#000" stroke="#ff3232"/>
<rect x="338" y="779" width="5" height="11" fill="#ffff00"/>
<rect x="351.5" y="784.5" width="10" height="6" fill="#000" stroke="#ff3232"/>
<rect x="367" y="785" width="11" height="5" fill="#00ffff"/>
<rect x="383" y="783" width="11" height="7" fill="#00ffff"/>
<rect x="398.5" y="786.5" width="10" height="4" fill="#000" stroke="#ff3232"/>
<rect x="414" y="785" width="11" height="5" fill="#00ffff"/>
<rect x="430" y="784" width="11" height="6" fill="#00ffff"/>
<rect x="446.5" y="786.5" width="10" height="4" fill="#000" stroke="#ff3232"/>
<rect x="461" y="785" width="11" height="5" fill="#00ffff"/>
<rect x="477" y="782" width="11" height="8" fill="#00ffff"/>
<rect x="493.5" y="782.5" width="10" height="8" fill="#000" stroke="#ff3232"/>
<rect x="496" y="783" width="5" height="7" fill="#ffffff"/>
<rect x="509.5" y="786.5" width="10" height="4" fill="#000" stroke="#ff3232"/>
<rect x="525.5" y="786.5" width="10" height="4" fill="#000" stroke="#ff3232"/>
<rect x="540" y="786" width="11" height="4" fill="#00ffff"/>
<rect x="543" y="788" width="5" height="2" fill="#000"/>
<rect x="556" y="785" width="11" height="5" fill="#00ffff"/>
<rect x="572.5" y="784.5" width="10" height="6" fill="#000" stroke="#ff3232"/>
<rect x="588" y="786" width="11" height="4" fill="#00ffff"/>
<rect x="604.5" y="786.5" width="10" height="4" fill="#000" stroke="#ff3232"/>
<rect x="619.5" y="784.5" width="10" height="6" fill="#000" stroke="#ff3232"/>
<rect x="635.5" y="782.5" width="10" height="8" fill="#000" stroke="#ff3232"/>
<rect x="651.5" y="782.5" width="10" height="8" fill="#000" stroke="#ff3232"/>
<rect x="654" y="783" width="5" height="7" fill="#ffffff"/>
<rect x="667" y="782" width="11" height="8" fill="#00ffff"/>
<rect x="682.5" y="786.5" width="10" height="4" fill="#000" stroke="#ff3232"/>
<rect x="698" y="784" width="11" height="6" fill="#00ffff"/>
<rect x="714.5" y="786.5" width="10" height="4" fill="#000" stroke="#ff3232"/>
<rect x="730" y="787" width="11" height="3" fill="#00ffff"/>
<rect x="733" y="789" width="5" height="1" fill="#808080"/>
<rect x="746.5" y="786.5" width="10" height="4" fill="#000" stroke="#ff3232"/>
<rect x="761.5" y="786.5" width="10" height="4" fill="#000" stroke="#ff3232"/>
<rect x="777" y="785" width="11" height="5" fill="#00ffff"/>
<rect x="793" y="785" width="11" height="5" fill="#00ffff"/>
<rect x="796" y="786" width="5" height="4" fill="#ffffff"/>
<rect x="809.5" y="784.5" width="10" height="6" fill="#000" stroke="#ff3232"/>
<rect x="825.5" y="786.5" width="10" height="4" fill="#000" stroke="#ff3232"/>
<rect x="840.5" y="787.5" width="10" height="3" fill="#000" stroke="#ff3232"/>
<rect x="843" y="789" width="5" height="1" fill="#808080"/>
<rect x="856" y="785" width="11" height="5" fill="#00ffff"/>
<rect x="872.5" y="787.5" width="10" height="3" fill="#000" stroke="#ff3232"/>
<rect x="875" y="789" width="5" height="1" fill="#808080"/>
<rect x="888.5" y="788.5" width="10" height="2" fill="#000" stroke="#ff3232"/>
<rect x="903.5" y="788.5" width="10" height="2" fill="#000" stroke="#ff3232"/>
<rect x="919.5" y="788.5" width="10" height="2" fill="#000" stroke="#ff3232"/>
<rect x="935" y="786" width="11" height="4" fill="#00ffff"/>
<rect x="951" y="786" width="11" height="4" fill="#00ffff"/>
<rect x="967.5" y="780.5" width="10" height="10" fill="#000" stroke="#ff3232"/>
<rect x="970" y="781" width="5" height="9" fill="#ffff00"/>
<rect x="982" y="784" width="11" height="6" fill="#00ffff"/>
<rect x="998" y="787" width="11" height="3" fill="#00ffff"/>
<rect x="1001" y="789" width="5" height="1" fill="#ff00ff"/>
<rect x="1014" y="785" width="11" height="5" fill="#00ffff"/>
<rect x="1030" y="787" width="11" height="3" fill="#00ffff"/>
<rect x="1033" y="789" width="5" height="1" fill="#ff00ff"/>
<rect x="1046" y="786" width="11" height="4" fill="#00ffff"/>
<rect x="1061" y="783" width="11" height="7" fill="#00ffff"/>
<rect x="1077.5" y="786.5" width="10" height="4" fill="#000" stroke="#ff3232"/>
<rect x="1093.5" y="787.5" width="10" height="3" fill="#000" stroke="#ff3232"/>
<rect x="1109.5" y="786.5" width="10" height="4" fill="#000" stroke="#ff3232"/>
<rect x="1124" y="788" width="11" height="2" fill="#00ffff"/>
<rect x="1127" y="789" width="5" height="1" fill="#ff00ff"/>
<rect x="1140.5" y="788.5" width="10" height="2" fill="#000" stroke="#ff3232"/>
<rect x="1156" y="787" width="11" height="3" fill="#00ffff"/>
<rect x="1172.5" y="788.5" width="10" height="2" fill="#000" stroke="#ff3232"/>
<rect x="1175" y="789" width="5" height="1" fill="#ff0000"/>
<rect x="1188.5" y="788.5" width="10" height="2" fill="#000" stroke="#ff3232"/>
<rect x="1203.5" y="786.5" width="10" height="4" fill="#000" stroke="#ff3232"/>
<rect x="1219" y="786" width="11" height="4" fill="#00ffff"/>
<rect x="1222" y="787" width="5" height="3" fill="#ffffff"/>
<rect x="1235.5" y="786.5" width="10" height="4" fill="#000" stroke="#ff3232"/>
<rect x="1238" y="787" width="5" height="3" fill="#ffffff"/>
<rect x="1251" y="786" width="11" height="4" fill="#00ffff"/>
<rect x="1267.5" y="786.5" width="10" height="4" fill="#000" stroke="#ff3232"/>
<rect x="1282.5" y="787.5" width="10" height="3" fill="#000" stroke="#ff3232"/>
<rect x="1298.5" y="788.5" width="10" height="2" fill="#000" stroke="#ff3232"/>
<rect x="1301" y="789" width="5" height="1" fill="#808080"/>
<rect x="1314.5" y="788.5" width="10" height="2" fill="#000" stroke="#ff3232"/>
<rect x="1330.5" y="788.5" width="10" height="2" fill="#000" stroke="#ff3232"/>
<rect x="1345" y="786" width="11" height="4" fill="#00ffff"/>
<rect x="1361.5" y="784.5" width="10" height="6" fill="#000" stroke="#ff3232"/>
<rect x="1377.5" y="786.5" width="10" height="4" fill="#000" stroke="#ff3232"/>
<rect x="1393.5" y="786.5" width="10" height="4" fill="#000" stroke="#ff3232"/>
</g>
<rect x="18" y="790" width="1390" height="1" fill="#c80000" shape-rendering="crispEdges"/>
<text y="737" font-size="12" font-family="Liberation Sans, Noto Sans CJK SC, sans-serif"><tspan x="18.5" fill="#c8c8c8" textLength="46.5" lengthAdjust="spacingAndGlyphs">黄金量柱</tspan><tspan x="71" fill="#ff00ff" textLength="109.5" lengthAdjust="spacingAndGlyphs">异动135: 149968.22</tspan><tspan x="186" fill="#0000ff" textLength="95.5" lengthAdjust="spacingAndGlyphs">洗盘40: 64896.10</tspan><tspan x="287" fill="#ffffff" textLength="88.5" lengthAdjust="spacingAndGlyphs">启动5: 43540.00</tspan><tspan x="385.7" fill="#c8c8c8" textLength="69.3" lengthAdjust="spacingAndGlyphs">量: 55666.54</tspan><tspan x="461" fill="#00ff00" textLength="53.0" lengthAdjust="spacingAndGlyphs">换手: 1.84</tspan><tspan x="520" fill="#30d030" textLength="96.5" lengthAdjust="spacingAndGlyphs">全换手周期: 46.00</tspan><tspan x="622" fill="#808000" textLength="53.7" lengthAdjust="spacingAndGlyphs">量比: 1.20</tspan><tspan x="680.7" fill="#ffff00" textLength="53.8" lengthAdjust="spacingAndGlyphs">几倍: 1.19</tspan><tspan x="740" fill="#ffff00" textLength="53.5" lengthAdjust="spacingAndGlyphs">倍量: 0.00</tspan><tspan x="799" fill="#ff00ff" textLength="53.7" lengthAdjust="spacingAndGlyphs">倍缩: 0.00</tspan><tspan x="857.7" fill="#ffffff" textLength="53.8" lengthAdjust="spacingAndGlyphs">平量: 0.00</tspan><tspan x="917" fill="#00ff00" textLength="67.5" lengthAdjust="spacingAndGlyphs">低量10: 0.00</tspan><tspan x="990" fill="#0000ff" textLength="68.0" lengthAdjust="spacingAndGlyphs">低量50: 0.00</tspan><tspan x="1063" fill="#909090" textLength="53.5" lengthAdjust="spacingAndGlyphs">地量: 0.00</tspan></text>
<text x="230" y="766" fill="#808080" font-size="12" font-family="Liberation Sans, Noto Sans CJK SC, sans-serif" >地量群</text>
<text x="877" y="766" fill="#808080" font-size="12" font-family="Liberation Sans, Noto Sans CJK SC, sans-serif" >地量群</text>
<g stroke="#009090" stroke-width="2" stroke-dasharray="3 1" shape-rendering="crispEdges"><line x1="247.5" x2="247.5" y1="767" y2="775"/><line x1="485.5" x2="485.5" y1="764" y2="773"/><line x1="801.5" x2="801.5" y1="767" y2="775"/></g>
<path d="M119.7 758l5 5.5h-3v5.5h-4v-5.5h-3z" fill="#ff0000" stroke="#b0c0c0" stroke-width="0.8"/>
<path d="M703.7 778l5 5.5h-3v5.5h-4v-5.5h-3z" fill="#ff0000" stroke="#b0c0c0" stroke-width="0.8"/>
<path d="M861.7 780l5 5.5h-3v5.5h-4v-5.5h-3z" fill="#ff0000" stroke="#b0c0c0" stroke-width="0.8"/>
<text y="803.5" font-size="12" font-family="Liberation Sans, Noto Sans CJK SC, sans-serif"><tspan x="18.5" fill="#c8c8c8" textLength="70.5" lengthAdjust="spacingAndGlyphs">振动指标公式</tspan><tspan x="95" fill="#ffffff" textLength="71.0" lengthAdjust="spacingAndGlyphs">振动: -103.27</tspan><tspan x="172" fill="#ffff00" textLength="74.5" lengthAdjust="spacingAndGlyphs">MASI: -103.70</tspan><tspan x="252" fill="#ff0000" textLength="63.5" lengthAdjust="spacingAndGlyphs">H20: -83.26</tspan><tspan x="321" fill="#00ffff" textLength="68.5" lengthAdjust="spacingAndGlyphs">L20: -105.03</tspan></text>
<text x="1328.5" y="947" font-size="24.5" font-weight="900" font-family="Liberation Sans, Noto Sans CJK SC, sans-serif"><tspan fill="#f26522">财富</tspan><tspan fill="#3399cc">池</tspan></text>
<text x="1330" y="960" font-size="12.5" fill="#909090" font-family="Liberation Serif, serif" textLength="71" lengthAdjust="spacingAndGlyphs">www.cfchi.com</text>
<polyline points="24.0,877.5 37.5,872.5 57.5,872.0 72.5,853.7 87.5,847.5 103.7,841.0 120.0,831.0 136.0,828.0 151.0,842.5 166.0,858.7 181.0,865.0 200.0,880.5 230.0,885.7 245.0,911.0 260.0,917.5 295.0,913.7 310.0,901.0 325.0,897.5 341.0,888.7 352.0,886.0 359.5,887.0 377.0,894.0 389.5,904.5 404.5,909.5 419.5,910.0 434.5,915.0 452.0,915.7 467.0,920.7 482.0,950.7 502.0,950.7 517.0,948.0 529.5,948.0 547.0,950.7 559.5,954.0 574.5,952.0 592.0,948.0 609.5,942.0 624.5,938.0 657.0,921.5 704.0,921.0 736.5,918.7 751.5,918.0 767.7,916.0 783.5,916.0 799.0,928.0 817.7,928.0 831.5,923.7 846.5,922.5 864.0,924.0 879.0,925.0 894.0,923.0 909.0,921.0 926.5,921.7 956.5,922.5 972.7,917.0 986.5,917.5 1004.0,922.5 1019.0,928.0 1036.5,931.0 1051.5,933.7 1056.0,943.0 1066.0,964.0 1078.5,966.5 1091.0,964.5 1116.0,958.0 1146.0,957.5 1176.0,958.0 1206.0,954.5 1228.5,953.0 1241.0,954.0 1256.0,960.7 1294.5,961.0 1325.0,958.5 1350.0,957.5 1358.0,955.0 1366.0,952.6 1375.0,954.0 1381.0,955.0 1408.0,951.0" fill="none" stroke="#ffffff" stroke-width="2" stroke-linejoin="round" shape-rendering="crispEdges"/>
<polyline points="24.0,878.0 182.5,878.0 200.0,881.0 230.0,885.7 245.0,911.0 260.0,917.5 352.0,917.7 452.0,918.0 467.0,920.7 482.0,950.7 547.0,952.0 557.0,955.0 704.0,954.5 864.0,954.5 876.5,950.5 891.5,948.0 906.5,942.5 924.0,938.7 940.0,930.0 956.5,927.5 1016.5,927.5 1036.5,931.0 1051.5,935.0 1056.0,944.5 1066.0,964.0 1078.5,966.5 1387.6,966.3 1408.0,962.0" fill="none" stroke="#00ffff" stroke-width="2" stroke-linejoin="round" shape-rendering="crispEdges"/>
<polyline points="24.0,858.7 57.5,867.5 87.5,868.0 103.7,860.0 120.0,852.5 136.0,845.7 151.0,841.7 166.0,842.0 181.0,845.0 200.0,851.7 215.0,860.0 230.0,868.7 246.0,880.7 262.5,891.0 277.5,898.7 293.7,903.7 310.0,907.5 325.0,908.0 341.0,905.7 352.0,901.5 377.0,895.7 402.0,895.7 434.5,903.0 467.0,913.0 499.5,927.0 532.0,940.0 559.5,950.0 574.5,950.7 592.0,950.0 624.5,948.0 655.7,939.5 687.0,929.5 704.0,926.0 719.0,923.7 751.5,920.0 783.5,918.0 816.5,920.0 846.5,921.7 876.5,924.5 909.0,923.0 956.5,922.0 986.5,920.0 1004.0,921.0 1036.5,923.7 1056.0,927.0 1081.0,939.5 1101.0,949.5 1126.0,957.0 1146.0,960.7 1176.0,959.5 1206.0,956.0 1231.0,955.0 1261.0,956.0 1294.5,958.0 1331.0,958.0 1381.0,955.0 1408.0,950.7" fill="none" stroke="#ffff00" stroke-width="2" stroke-linejoin="round" shape-rendering="crispEdges"/>
<polyline points="24.0,810.0 57.0,830.5 120.0,830.5 136.0,828.0 435.0,828.0 455.7,847.0 467.0,858.7 482.0,864.5 498.0,880.0 527.0,885.7 655.7,885.7 672.0,892.0 687.0,904.5 704.0,909.5 719.0,910.0 734.0,915.0 751.5,915.0 767.7,912.5 1081.0,912.7 1095.0,917.0 1271.0,917.0 1287.6,917.8 1309.0,923.7 1329.0,930.0 1358.0,942.0 1366.0,951.0 1378.0,949.0 1387.6,947.0 1408.0,946.7" fill="none" stroke="#ff0000" stroke-width="2" stroke-linejoin="round" shape-rendering="crispEdges"/>
<path d="M72.7 863l5 5.5h-3v5.5h-4v-5.5h-3z" fill="#ff0000" stroke="#b0c0c0" stroke-width="0.8"/>
<path d="M310.2 902l5 5.5h-3v5.5h-4v-5.5h-3z" fill="#ff0000" stroke="#b0c0c0" stroke-width="0.8"/>
<path d="M577.9000000000001 946.5l5 5.5h-3v5.5h-4v-5.5h-3z" fill="#ff0000" stroke="#b0c0c0" stroke-width="0.8"/>
<path d="M877.2 920.5l5 5.5h-3v5.5h-4v-5.5h-3z" fill="#ff0000" stroke="#b0c0c0" stroke-width="0.8"/>
<path d="M972.9000000000001 918l5 5.5h-3v5.5h-4v-5.5h-3z" fill="#ff0000" stroke="#b0c0c0" stroke-width="0.8"/>
<path d="M1145.7 956l5 5.5h-3v5.5h-4v-5.5h-3z" fill="#ff0000" stroke="#b0c0c0" stroke-width="0.8"/>
<path d="M1193.7 953.5l5 5.5h-3v5.5h-4v-5.5h-3z" fill="#ff0000" stroke="#b0c0c0" stroke-width="0.8"/>
<path d="M1320.2 958.5l5 5.5h-3v5.5h-4v-5.5h-3z" fill="#ff0000" stroke="#b0c0c0" stroke-width="0.8"/>
<path d="M152.0 831l5 -5.500h-3v-5.500h-4v5.500h-3z" fill="#00ff00" stroke="#008800" stroke-width="0.6"/>
<path d="M783.3 916l5 -5.500h-3v-5.500h-4v5.500h-3z" fill="#00ff00" stroke="#008800" stroke-width="0.6"/>
<polygon points="595,652.4 609.5,662 606.3,665.2 631.6,721.3 600.6,668.8 597.3,669.5" fill="#fff"/>
<polygon points="594.3,834.6 593,816.8 598.2,818.8 637,738.7 604.2,821.6 607.3,824" fill="#fff"/>
<text x="631" y="724" fill="#ff3030" font-size="16" font-family="Liberation Sans, Noto Sans CJK SC, sans-serif" font-weight="300">买入信号发出</text>
<g shape-rendering="crispEdges" fill="#c0c0c0" style="mix-blend-mode:difference">
<rect x="18" y="620" width="1390" height="1"/>
<rect x="575" y="102" width="1" height="689"/>
<rect x="575" y="806" width="1" height="162"/>
</g>
<defs><linearGradient id="lg" x1="0" y1="0" x2="0" y2="1"><stop offset="0" stop-color="#f8504a"/><stop offset="1" stop-color="#f4460c"/></linearGradient></defs>
<rect x="1290" y="924" width="35" height="36" rx="7" fill="url(#lg)"/>
<circle cx="1307.5" cy="942" r="13.5" fill="none" stroke="#fff" stroke-width="2"/>
<text x="1299.5" y="948" fill="#fff" font-size="16" font-weight="700" font-family="Liberation Sans, Noto Sans CJK SC, sans-serif">财</text>
<rect x="1297" y="949" width="21" height="1.6" fill="#fff"/>
<rect x="0" y="70" width="17" height="898" fill="#000"/>
<rect x="0" y="70" width="1" height="898" fill="#5a6268" shape-rendering="crispEdges"/>
<g fill="none" stroke="#c80000" stroke-width="1">
<path d="M1.5 74V611"/>
<path d="M1.5 74L3.5 71.5H17.5V129L15.5 131.5H1.5"/>
<path d="M1.5 133.5L3.5 131.5"/>
<path d="M1.5 192L17.5 197.5V968"/>
<path d="M1.5 251.5H17.5M1.5 254L3.5 251.5"/>
<path d="M1.5 300.5H17.5M1.5 303L3.5 300.5"/>
<path d="M1.5 360.5H17.5M1.5 363L3.5 360.5"/>
<path d="M1.5 419.5H17.5M1.5 422L3.5 419.5"/>
<path d="M1.5 491.5H17.5M1.5 494L3.5 491.5"/>
<path d="M1.5 551.5H17.5M1.5 554L3.5 551.5"/>
<path d="M1.5 611L17.5 618.5"/>
</g>
<text x="3.5" y="88.7" fill="#c8c8c8" font-size="12" font-family="Liberation Sans, Noto Sans CJK SC, sans-serif">分</text>
<text x="3.5" y="101.2" fill="#c8c8c8" font-size="12" font-family="Liberation Sans, Noto Sans CJK SC, sans-serif">时</text>
<text x="3.5" y="113.7" fill="#c8c8c8" font-size="12" font-family="Liberation Sans, Noto Sans CJK SC, sans-serif">走</text>
<text x="3.5" y="126.2" fill="#c8c8c8" font-size="12" font-family="Liberation Sans, Noto Sans CJK SC, sans-serif">势</text>
<text x="3.5" y="149.8" fill="#00ffff" font-size="12" font-family="Liberation Sans, Noto Sans CJK SC, sans-serif">技</text>
<text x="3.5" y="162.3" fill="#00ffff" font-size="12" font-family="Liberation Sans, Noto Sans CJK SC, sans-serif">术</text>
<text x="3.5" y="174.8" fill="#00ffff" font-size="12" font-family="Liberation Sans, Noto Sans CJK SC, sans-serif">分</text>
<text x="3.5" y="187.3" fill="#00ffff" font-size="12" font-family="Liberation Sans, Noto Sans CJK SC, sans-serif">析</text>
<text x="3.5" y="209.8" fill="#c8c8c8" font-size="12" font-family="Liberation Sans, Noto Sans CJK SC, sans-serif">基</text>
<text x="3.5" y="222.3" fill="#c8c8c8" font-size="12" font-family="Liberation Sans, Noto Sans CJK SC, sans-serif">本</text>
<text x="3.5" y="234.8" fill="#c8c8c8" font-size="12" font-family="Liberation Sans, Noto Sans CJK SC, sans-serif">资</text>
<text x="3.5" y="247.3" fill="#c8c8c8" font-size="12" font-family="Liberation Sans, Noto Sans CJK SC, sans-serif">料</text>
<text x="3.5" y="269.8" fill="#c8c8c8" font-size="12" font-family="Liberation Sans, Noto Sans CJK SC, sans-serif">东</text>
<text x="3.5" y="282.3" fill="#c8c8c8" font-size="12" font-family="Liberation Sans, Noto Sans CJK SC, sans-serif">财</text>
<text x="3" y="294.3" fill="#c8c8c8" font-size="12" font-family="Liberation Sans, Noto Sans CJK SC, sans-serif">10</text>
<text x="3.5" y="318.3" fill="#c8c8c8" font-size="12" font-family="Liberation Sans, Noto Sans CJK SC, sans-serif">同</text>
<text x="3.5" y="330.8" fill="#c8c8c8" font-size="12" font-family="Liberation Sans, Noto Sans CJK SC, sans-serif">花</text>
<text x="3.5" y="343.3" fill="#c8c8c8" font-size="12" font-family="Liberation Sans, Noto Sans CJK SC, sans-serif">顺</text>
<text x="3" y="355.3" fill="#c8c8c8" font-size="12" font-family="Liberation Sans, Noto Sans CJK SC, sans-serif">10</text>
<text x="3.5" y="377.8" fill="#c8c8c8" font-size="12" font-family="Liberation Sans, Noto Sans CJK SC, sans-serif">维</text>
<text x="3.5" y="390.3" fill="#c8c8c8" font-size="12" font-family="Liberation Sans, Noto Sans CJK SC, sans-serif">赛</text>
<text x="3.5" y="402.8" fill="#c8c8c8" font-size="12" font-family="Liberation Sans, Noto Sans CJK SC, sans-serif">特</text>
<text x="3" y="414.8" fill="#c8c8c8" font-size="12" font-family="Liberation Sans, Noto Sans CJK SC, sans-serif">10</text>
<text x="3.5" y="438.3" fill="#c8c8c8" font-size="12" font-family="Liberation Sans, Noto Sans CJK SC, sans-serif">个</text>
<text x="3.5" y="450.8" fill="#c8c8c8" font-size="12" font-family="Liberation Sans, Noto Sans CJK SC, sans-serif">股</text>
<text x="3.5" y="463.3" fill="#c8c8c8" font-size="12" font-family="Liberation Sans, Noto Sans CJK SC, sans-serif">龙</text>
<text x="3.5" y="475.8" fill="#c8c8c8" font-size="12" font-family="Liberation Sans, Noto Sans CJK SC, sans-serif">虎</text>
<text x="3.5" y="488.3" fill="#c8c8c8" font-size="12" font-family="Liberation Sans, Noto Sans CJK SC, sans-serif">榜</text>
<text x="3.5" y="510.3" fill="#c8c8c8" font-size="12" font-family="Liberation Sans, Noto Sans CJK SC, sans-serif">超</text>
<text x="3.5" y="522.8" fill="#c8c8c8" font-size="12" font-family="Liberation Sans, Noto Sans CJK SC, sans-serif">赢</text>
<text x="3.5" y="535.3" fill="#c8c8c8" font-size="12" font-family="Liberation Sans, Noto Sans CJK SC, sans-serif">主</text>
<text x="3.5" y="547.8" fill="#c8c8c8" font-size="12" font-family="Liberation Sans, Noto Sans CJK SC, sans-serif">力</text>
<text x="3.5" y="569.8" fill="#c8c8c8" font-size="12" font-family="Liberation Sans, Noto Sans CJK SC, sans-serif">东</text>
<text x="3.5" y="582.3" fill="#c8c8c8" font-size="12" font-family="Liberation Sans, Noto Sans CJK SC, sans-serif">财</text>
<text x="3.5" y="594.8" fill="#c8c8c8" font-size="12" font-family="Liberation Sans, Noto Sans CJK SC, sans-serif">股</text>
<text x="3.5" y="607.3" fill="#c8c8c8" font-size="12" font-family="Liberation Sans, Noto Sans CJK SC, sans-serif">吧</text>
<polygon points="1,519 10,545 1,572" fill="#707070" opacity="0.75"/>
<polygon points="2,541 7,545.3 2,549.5" fill="#ffa000"/>
</svg>
</body></html>
